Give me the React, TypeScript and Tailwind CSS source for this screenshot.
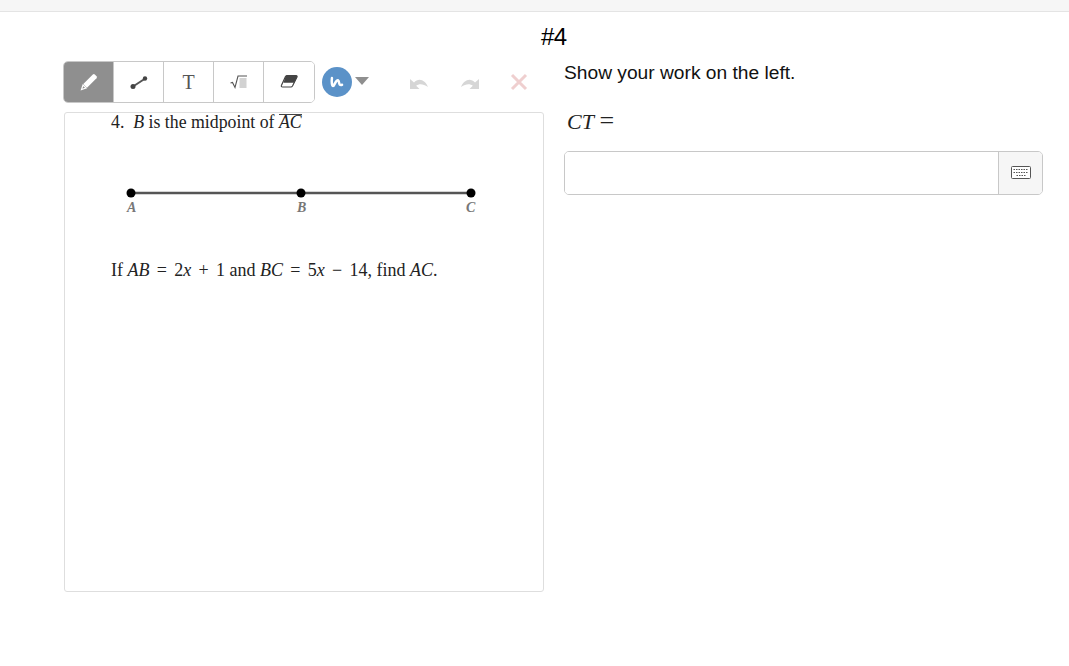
import { Fragment } from "react";

const serif = "font-['Liberation_Serif',serif]";

const ToolDivider = () => <div className="w-px h-full bg-[#c8c8c8]" />;

const Op = ({ children }: { children: string }) => <span className="mx-[7.300px]">{children}</span>;

const Segment = () => (
  <svg width="390" height="44" viewBox="0 0 390 44" className="block">
    <line x1="21" y1="9" x2="361" y2="9" stroke="#555" strokeWidth="2.500" />
    <circle cx="21" cy="9" r="4.500" fill="#000" />
    <circle cx="191" cy="9" r="4.500" fill="#000" />
    <circle cx="361" cy="9" r="4.500" fill="#000" />
  </svg>
);

const tools = [
  <svg key="pencil" width="20" height="20" viewBox="0 0 20 20">
    <path d="M13.800 2.500a1.500 1.500 0 0 1 2 0l1.700 1.700a1.500 1.500 0 0 1 0 2L8 15.700l-3.700-3.700z" fill="#fff" />
    <path d="M4 13l3 3-4.500 1.500z" fill="none" stroke="#fff" strokeWidth="1.200" />
  </svg>,
  <svg key="line" width="20" height="20" viewBox="0 0 20 20">
    <line x1="4" y1="14.500" x2="15.500" y2="7" stroke="#555" strokeWidth="2" />
    <circle cx="4" cy="14.500" r="2.500" fill="#444" />
    <circle cx="16" cy="6.500" r="2.200" fill="#444" />
  </svg>,
  <span key="text" className={`${serif} text-[20px] leading-none text-[#555]`}>T</span>,
  <svg key="root" width="20" height="20" viewBox="0 0 20 20">
    <path d="M1.500 11l2-.5 2.500 5L9 4h9" fill="none" stroke="#555" strokeWidth="1.100" />
    <rect x="10.500" y="6" width="7" height="10" fill="#d2d2d2" />
  </svg>,
  <svg key="eraser" width="20" height="20" viewBox="0 0 20 20">
    <path d="M8 3.500h9c1 0 1.300.8 1 1.500l-4.500 9c-.4.6-.8 1-1.500 1H3.500c-1 0-1.500-.8-1-1.700L6.500 4.500C7 3.800 7.300 3.500 8 3.500z" fill="#fff" stroke="#444" strokeWidth="1.200" strokeLinejoin="round" />
    <path d="M8 3.500h9c1 0 1.300.8 1 1.500l-2.800 5.800H4.500l2-6.300C7 3.800 7.300 3.500 8 3.500z" fill="#444" />
  </svg>,
];

export default function App() {
  return (
    <div className="w-[1069px] h-[666px] bg-white overflow-hidden font-['Liberation_Sans',sans-serif] text-black">
      <div className="h-[12px] bg-[#f6f6f6] border-b border-[#e4e4e4]" />
      <div className="h-[49px] pl-[541px] pt-[11px] text-[24px] leading-[28px] tracking-[-0.6px]">#4</div>
      <div className="flex pl-[63px] gap-[20px]">
        <div className="w-[481px]">
          <div className="h-[42px] flex items-center">
            <div className="w-[252px] h-full flex items-center border border-[#c8c8c8] rounded-[5px] overflow-hidden">
              {tools.map((icon, i) => (
                <Fragment key={i}>
                  {i > 0 && <ToolDivider />}
                  <div className={`h-full flex items-center justify-center ${i === 4 ? "flex-1" : "w-[49px]"} ${i === 0 ? "bg-[#8f8f8f]" : "bg-white"}`}>
                    {icon}
                  </div>
                </Fragment>
              ))}
            </div>
            <div className="ml-[7px] w-[30px] h-[30px] rounded-full bg-[#5b92c8] flex items-center justify-center">
              <svg width="18" height="18" viewBox="0 0 16 16">
                <path d="M3.500 4.500C3 8 3.500 12 4.800 11.500 6 10.500 7 6 9 6.500 10.500 7 8.800 11.500 12.500 10.500" fill="none" stroke="#fff" strokeWidth="2.200" strokeLinecap="round" strokeLinejoin="round" />
              </svg>
            </div>
            <div className="ml-[3px] w-0 h-0 border-x-[7px] border-x-transparent border-t-[8px] border-t-[#8f8f8f] mb-[2px]" />
            <svg width="20" height="16" viewBox="0 0 20 16" className="ml-[40px]">
              <path d="M1 5v10h9.500l-3.300-3.300C10 9.500 14 9.500 19 13 16.500 6.500 10 3 5 8.500z" fill="#d6d6d6" />
            </svg>
            <svg width="20" height="16" viewBox="0 0 20 16" className="ml-[31px]">
              <path d="M19 5v10H9.500l3.300-3.300C10 9.500 6 9.500 1 13 3.500 6.500 10 3 15 8.500z" fill="#d6d6d6" />
            </svg>
            <svg width="18" height="18" viewBox="0 0 18 18" className="ml-[30px]">
              <path d="M2 2l14 14M16 2L2 16" stroke="#efcfcf" strokeWidth="3" />
            </svg>
          </div>
          <div className="mt-[9px] ml-px w-[480px] h-[480px] border border-[#dedede] rounded-[3px] pl-[46px] text-[#222]">
            <div className={`${serif} text-[17.800px] leading-[19px]`}>
              4.&nbsp; <i>B</i> is the midpoint of{" "}
              <span className="relative inline-block">
                <i>AC</i>
                <span className="absolute left-0 right-0 top-[1px] h-px bg-[#444]" />
              </span>
            </div>
            <div className="mt-[52px] ml-[-1px] relative h-[44px]">
              <Segment />
              <span className={`${serif} absolute left-[17px] top-[13px] text-[14px] font-bold italic text-[#777]`}>A</span>
              <span className={`${serif} absolute left-[187px] top-[13px] text-[14px] font-bold italic text-[#777]`}>B</span>
              <span className={`${serif} absolute left-[356px] top-[13px] text-[14px] font-bold italic text-[#777]`}>C</span>
            </div>
            <div className={`${serif} mt-[31px] text-[18px] leading-[22px]`}>
              If <i>AB</i><Op>=</Op>2<i>x</i><Op>+</Op>1 and <i>BC</i><Op>=</Op>5<i>x</i><Op>−</Op>14, find <i>AC</i>.
            </div>
          </div>
        </div>
        <div className="w-[479px]">
          <div className="text-[19.200px] leading-[22px] pt-px text-[#111]">Show your work on the left.</div>
          <div className={`${serif} mt-[24px] ml-[3px] h-[26px] text-[22px] leading-[26px] text-[#222]`}>
            <i>CT</i> <span className="text-[26px] leading-none">=</span>
          </div>
          <div className="mt-[17px] h-[44px] flex border border-[#c8c8c8] rounded-[5px] overflow-hidden">
            <div className="flex-1 bg-white" />
            <div className="w-[44px] bg-[#f6f6f6] border-l border-[#c8c8c8] flex items-center justify-center">
              <svg width="20" height="14" viewBox="0 0 20 14">
                <rect x="0.500" y="0.500" width="19" height="12" rx="1" fill="#fff" stroke="#555" />
                <path d="M2.500 3.500h15M2.500 6.500h15" stroke="#555" strokeDasharray="1.500 1" />
                <path d="M5.500 9.500h9" stroke="#555" strokeDasharray="1.500 1" />
              </svg>
            </div>
          </div>
        </div>
      </div>
    </div>
  );
}
